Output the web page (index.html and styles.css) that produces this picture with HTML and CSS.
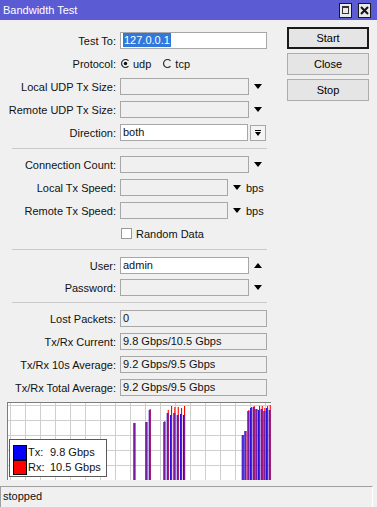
FILE: index.html
```html
<!DOCTYPE html>
<html lang="en">

<head>
    <meta charset="UTF-8">
    <meta name="viewport" content="width=device-width, initial-scale=1.0">
    <title>Bandwidth Test</title>
    <link rel="stylesheet" href="styles.css">
</head>

<body>

    <div class="window">
        <div class="titlebar">
            <span class="title">Bandwidth Test</span>
            <div class="title-buttons">
                <span class="tb-btn"><span class="max-icon"></span></span>
                <span class="tb-btn">
                    <svg width="9" height="9" viewBox="0 0 9 9">
                        <path d="M1 1 L8 8 M8 1 L1 8" stroke="#111" stroke-width="2" />
                    </svg>
                </span>
            </div>
        </div>

        <div class="main">
            <div class="form">
                <div class="section">
                    <div class="row">
                        <label>Test To:</label>
                        <div class="ctl"><div class="field white full"><span class="selected">127.0.0.1</span></div></div>
                    </div>
                    <div class="row">
                        <label>Protocol:</label>
                        <div class="ctl radios">
                            <span class="radio-opt">
                                <svg class="radio" width="9" height="9" viewBox="0 0 9 9">
                                    <path d="M7.5 1.8 A4 4 0 1 0 7.5 7.2" fill="none" stroke="#333" stroke-width="1.2" />
                                    <circle cx="4.5" cy="4.5" r="1.7" fill="#111" />
                                </svg>
                                udp
                            </span>
                            <span class="radio-opt">
                                <svg class="radio" width="9" height="9" viewBox="0 0 9 9">
                                    <path d="M7.5 1.8 A4 4 0 1 0 7.5 7.2" fill="none" stroke="#333" stroke-width="1.2" />
                                </svg>
                                tcp
                            </span>
                        </div>
                    </div>
                    <div class="row">
                        <label>Local UDP Tx Size:</label>
                        <div class="ctl"><div class="field short"></div><span class="arrow-cell"><span class="tri-down"></span></span></div>
                    </div>
                    <div class="row">
                        <label>Remote UDP Tx Size:</label>
                        <div class="ctl"><div class="field short"></div><span class="arrow-cell"><span class="tri-down"></span></span></div>
                    </div>
                    <div class="row">
                        <label>Direction:</label>
                        <div class="ctl">
                            <div class="field white direction">both</div>
                            <span class="drop-btn"><span class="drop-bar"></span><span class="tri-down small"></span></span>
                        </div>
                    </div>
                </div>

                <div class="sep"></div>

                <div class="section">
                    <div class="row">
                        <label>Connection Count:</label>
                        <div class="ctl"><div class="field short"></div><span class="arrow-cell"><span class="tri-down"></span></span></div>
                    </div>
                    <div class="row">
                        <label>Local Tx Speed:</label>
                        <div class="ctl"><div class="field speed"></div><span class="arrow-cell narrow"><span class="tri-down"></span></span><span class="unit">bps</span></div>
                    </div>
                    <div class="row">
                        <label>Remote Tx Speed:</label>
                        <div class="ctl"><div class="field speed"></div><span class="arrow-cell narrow"><span class="tri-down"></span></span><span class="unit">bps</span></div>
                    </div>
                    <div class="row">
                        <span></span>
                        <div class="ctl check"><span class="checkbox"></span>Random Data</div>
                    </div>
                </div>

                <div class="sep"></div>

                <div class="section tight">
                    <div class="row">
                        <label>User:</label>
                        <div class="ctl"><div class="field white short">admin</div><span class="arrow-cell"><span class="tri-up"></span></span></div>
                    </div>
                    <div class="row">
                        <label>Password:</label>
                        <div class="ctl"><div class="field short"></div><span class="arrow-cell"><span class="tri-down"></span></span></div>
                    </div>
                </div>

                <div class="sep sep-last"></div>

                <div class="section">
                    <div class="row">
                        <label>Lost Packets:</label>
                        <div class="ctl"><div class="field full">0</div></div>
                    </div>
                    <div class="row">
                        <label>Tx/Rx Current:</label>
                        <div class="ctl"><div class="field full">9.8 Gbps/10.5 Gbps</div></div>
                    </div>
                    <div class="row">
                        <label>Tx/Rx 10s Average:</label>
                        <div class="ctl"><div class="field full">9.2 Gbps/9.5 Gbps</div></div>
                    </div>
                    <div class="row">
                        <label>Tx/Rx Total Average:</label>
                        <div class="ctl"><div class="field full">9.2 Gbps/9.5 Gbps</div></div>
                    </div>
                </div>

                <!-- traffic graph -->
                <div class="graph">
                    <svg id="bars" width="263" height="77" viewBox="0 0 263 77"></svg>
                    <div class="legend">
                        <div class="legend-row"><span class="swatch tx"></span><span class="legend-key">Tx:</span>9.8 Gbps</div>
                        <div class="legend-row"><span class="swatch rx"></span><span class="legend-key">Rx:</span>10.5 Gbps</div>
                    </div>
                </div>
            </div>

            <div class="buttons">
                <button class="btn default">Start</button>
                <button class="btn">Close</button>
                <button class="btn">Stop</button>
            </div>
        </div>

        <div class="status">stopped</div>
    </div>

    <script>
        function drawBars() {
            // x position, tx top, rx top (window pixels)
            const samples = [
                [133.3, 423, 423], [145.3, 422, 422], [148.7, 410, 409],
                [163.3, 422, 421], [166.7, 413, 410], [170, 415, 406], [173.3, 413, 407],
                [176.7, 415, 407], [180, 414, 408], [183, 415, 406],
                [241.7, 435, 435], [244.3, 431, 431], [247.3, 411, 410], [250, 408, 407],
                [252.7, 407, 406], [255.3, 409, 409], [258, 410, 406], [260.7, 409, 406],
                [263.3, 411, 408], [266, 408, 406], [268.7, 410, 405]
            ];
            const svg = document.getElementById("bars");
            const ns = "http://www.w3.org/2000/svg";
            const graphLeft = 8, graphTop = 403, graphBottom = 480;

            function bar(x, y, color) {
                const r = document.createElementNS(ns, "rect");
                r.setAttribute("x", x);
                r.setAttribute("y", y);
                r.setAttribute("width", 1.1);
                r.setAttribute("height", graphBottom - graphTop - y);
                r.setAttribute("fill", color);
                svg.appendChild(r);
            }

            samples.forEach(function (s) {
                const x = s[0] - graphLeft;
                bar(x + 1, s[2] - graphTop, "#ff0000");
                // where tx and rx overlap the two lines blend to purple
                bar(x + 1, Math.max(s[1], s[2]) - graphTop, "#8a1a8e");
                bar(x, s[1] - graphTop, "#2a10d8");
            });
        }

        drawBars();
    </script>

</body>

</html>
```

FILE: styles.css
```css
/* Window */
body {
    margin: 0;
    background: #f0f0f0;
    font-family: "Liberation Sans", Arial, sans-serif;
    font-size: 11px;
    color: #111;
}

.window {
    width: 377px;
    height: 507px;
    display: flex;
    flex-direction: column;
}

.titlebar {
    height: 20px;
    background: #5b5bd3;
    color: #fff;
    display: flex;
    align-items: center;
    justify-content: space-between;
    padding: 0 6px 0 3px;
}

.title {
    font-size: 11px;
}

.title-buttons {
    display: flex;
    gap: 6px;
}

.tb-btn {
    width: 11px;
    height: 13px;
    border: 1px solid #1a1a1a;
    background: #e9e9e9;
    display: flex;
    align-items: center;
    justify-content: center;
}

.max-icon {
    width: 5px;
    height: 5px;
    border: 1px solid #333;
    border-top-width: 2px;
}

/* Layout */
.main {
    display: flex;
}

.form {
    width: 272px;
    padding-top: 12px;
}

.section {
    display: flex;
    flex-direction: column;
    gap: 6px;
}

.section.tight {
    gap: 5px;
}

.row {
    display: grid;
    grid-template-columns: 116px 147px;
    column-gap: 4px;
    height: 17px;
    align-items: center;
}

.row label {
    text-align: right;
    white-space: nowrap;
}

.sep {
    margin: 7px 0 7px 12px;
    width: 255px;
    border-top: 1px solid #c9c9c9;
}

.sep-last {
    margin-top: 6px;
}

/* Controls */
.ctl {
    display: flex;
    align-items: center;
    height: 17px;
}

.field {
    box-sizing: border-box;
    height: 17px;
    border: 1px solid #a7a7a7;
    background: #f0f0f0;
    padding: 0 2px;
    line-height: 15px;
    white-space: nowrap;
}

.field.white {
    background: #fff;
}

.field.full {
    width: 147px;
}

.field.short {
    width: 129px;
}

.field.direction {
    width: 128px;
}

.field.speed {
    width: 108px;
}

.selected {
    background: #3078dc;
    color: #fff;
    padding: 1px 1px;
}

.arrow-cell {
    width: 18px;
    display: flex;
    justify-content: center;
}

.arrow-cell.narrow {
    width: 17px;
}

.unit {
    margin-left: 1px;
}

.tri-down {
    width: 0;
    height: 0;
    border-left: 4px solid transparent;
    border-right: 4px solid transparent;
    border-top: 5px solid #000;
}

.tri-down.small {
    border-left-width: 3px;
    border-right-width: 3px;
    border-top-width: 4px;
}

.tri-up {
    width: 0;
    height: 0;
    border-left: 4px solid transparent;
    border-right: 4px solid transparent;
    border-bottom: 5px solid #000;
}

.drop-btn {
    box-sizing: border-box;
    width: 16px;
    height: 16px;
    margin-left: 2px;
    border: 1px solid #a7a7a7;
    background: #f4f4f4;
    display: flex;
    flex-direction: column;
    align-items: center;
    justify-content: center;
    gap: 1px;
}

.drop-bar {
    width: 6px;
    height: 1px;
    background: #000;
}

.radios {
    padding-left: 1px;
}

.radio-opt {
    display: flex;
    align-items: center;
    gap: 3px;
    margin-right: 12px;
}

.check {
    padding-left: 1px;
    gap: 4px;
}

.checkbox {
    box-sizing: border-box;
    width: 11px;
    height: 11px;
    border: 1px solid #999;
    background: #fff;
}

/* Graph */
.graph {
    position: relative;
    width: 263px;
    height: 77px;
    margin: 6px 0 0 7px;
    border-top: 1px solid #7c7c7c;
    border-left: 1px solid #7c7c7c;
    background-color: #fff;
    background-image:
        linear-gradient(to right, #cfcfcf 1px, transparent 1px),
        linear-gradient(to bottom, #cfcfcf 1px, transparent 1px);
    background-size: 15px 15px;
    background-position: 2px 2px;
}

.graph svg {
    display: block;
}

.legend {
    position: absolute;
    left: 1px;
    top: 36px;
    box-sizing: border-box;
    width: 98px;
    height: 38px;
    border: 1px solid #5a5a5a;
    background: #fff;
    padding: 5px 3px;
    display: flex;
    flex-direction: column;
    gap: 1px;
}

.legend-row {
    display: flex;
    align-items: center;
    height: 14px;
    white-space: nowrap;
}

.swatch {
    box-sizing: border-box;
    width: 14px;
    height: 15px;
    border: 1px solid #000;
    margin-right: 1px;
}

.swatch.tx {
    background: #0000ff;
}

.swatch.rx {
    background: #ff0000;
}

.legend-key {
    width: 22px;
}

/* Buttons */
.buttons {
    display: flex;
    flex-direction: column;
    gap: 4px;
    padding-top: 7px;
    margin-left: 15px;
}

.btn {
    width: 82px;
    height: 22px;
    border: 1px solid #adadad;
    background: #e5e5e5;
    font-family: inherit;
    font-size: 11px;
    color: #000;
    padding: 0;
}

.btn.default {
    border: 2px solid #1a1a1a;
}

/* Status bar */
.status {
    margin: 6px 4px 0 0;
    flex: 1;
    border-top: 1px solid #a0a0a0;
    border-left: 1px solid #a0a0a0;
    border-right: 1px solid #fff;
    padding: 3px 0 0 2px;
}
```
